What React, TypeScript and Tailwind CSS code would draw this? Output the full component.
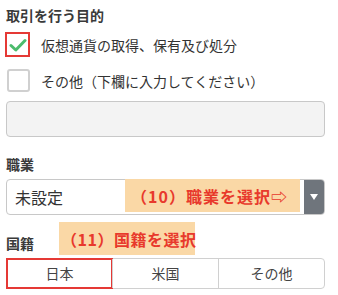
import React from "react";

const options = ["日本", "米国", "その他"];

function CheckMark() {
  return (
    <svg width="18" height="14" viewBox="0 0 18 14" fill="none">
      <path
        d="M2 7.5 L6.8 12 L16 2.5"
        stroke="#4cbb6c"
        strokeWidth="3"
        strokeLinecap="round"
        strokeLinejoin="round"
      />
    </svg>
  );
}

export default function App() {
  return (
    <div
      className="relative w-[338px] h-[295px] bg-white pl-[6px] pr-[13px] text-[#333]"
      style={{ fontFamily: '"Noto Sans CJK JP", "Noto Sans", sans-serif' }}
    >
      <div className="pt-[7px] text-[14px] leading-[16px] font-bold text-[#3a3a3a]">
        取引を行う目的
      </div>

      {/* purpose checkboxes */}
      <div className="mt-[9px] flex h-[25px] items-center">
        <div className="-ml-[1px] flex h-[25px] w-[25px] items-center justify-center border-2 border-[#e53935] bg-white">
          <CheckMark />
        </div>
        <span className="ml-[11px] text-[14px] leading-[16px]">
          仮想通貨の取得、保有及び処分
        </span>
      </div>
      <div className="mt-[12px] flex h-[23px] items-center">
        <div className="ml-[1px] h-[23px] w-[23px] rounded-[3px] border-2 border-[#d0d0d0] bg-white" />
        <span className="ml-[11px] text-[14px] leading-[16px]">
          その他（下欄に入力してください）
        </span>
      </div>
      <div className="mt-[9px] h-[36px] w-full rounded-[4px] border border-[#c8c8c8] bg-[#f3f3f3]" />

      {/* occupation */}
      <div className="mt-[19px] text-[14px] leading-[16px] font-bold text-[#3a3a3a]">
        職業
      </div>
      <div className="mt-[7px] flex h-[36px] w-full items-stretch overflow-hidden rounded-[4px] border border-[#c8c8c8]">
        <div className="flex flex-1 items-center pl-[8px] text-[16px]">未設定</div>
        <div className="flex w-[20px] items-center justify-center bg-[#6f757c]">
          <svg width="8" height="6" viewBox="0 0 8 6">
            <path d="M0 0 H8 L4 6 Z" fill="#fff" />
          </svg>
        </div>
      </div>

      {/* nationality */}
      <div className="mt-[20px] text-[14px] leading-[16px] font-bold text-[#3a3a3a]">
        国籍
      </div>
      <div className="mt-[7px] flex h-[31px] w-full rounded-[4px] border border-[#d0d0d0]">
        {options.map((o, i) => (
          <div
            key={o}
            className={`relative flex flex-1 items-center justify-center text-[14px] text-[#444] ${
              i > 0 ? "border-l border-[#d0d0d0]" : ""
            }`}
          >
            {i === 0 && (
              <div className="absolute -inset-[1px] border-2 border-[#e53935]" />
            )}
            {o}
          </div>
        ))}
      </div>

      {/* annotations */}
      <div className="absolute left-[125px] top-[179px] flex h-[33px] w-[175px] items-center whitespace-nowrap bg-[#fad8a6] pl-[6px] text-[16px] font-bold tracking-[1px] text-[#e8392c]">
        （10）職業を選択⇨
      </div>
      <div className="absolute left-[59px] top-[222px] flex h-[33px] w-[136px] items-center whitespace-nowrap bg-[#fad8a6] pl-[2px] text-[16px] font-bold tracking-[0.5px] text-[#e8392c]">
        （11）国籍を選択
      </div>
    </div>
  );
}
